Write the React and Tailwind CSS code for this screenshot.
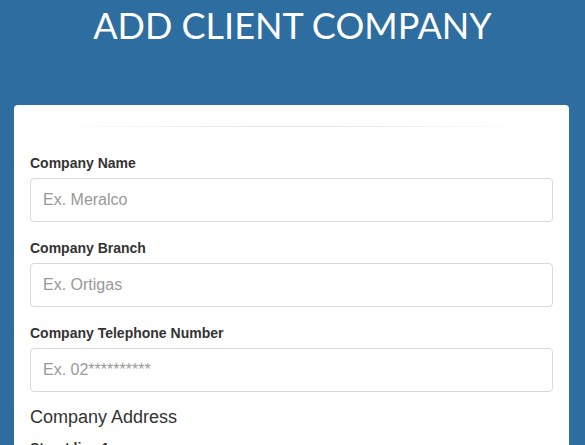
import React from 'react';

const fields = [
  { label: 'Company Name', placeholder: 'Ex. Meralco' },
  { label: 'Company Branch', placeholder: 'Ex. Ortigas' },
  { label: 'Company Telephone Number', placeholder: 'Ex. 02**********' },
];

const App = () => {
  return (
    <div className="min-h-screen bg-[#2e6d9f] overflow-hidden" style={{ fontFamily: '"Liberation Sans", Arial, sans-serif' }}>
      <h1 className="text-center text-white text-[36px] leading-[50px] h-[105px]" style={{ fontFamily: 'Lato, sans-serif' }}>
        ADD CLIENT COMPANY
      </h1>
      <div className="ml-[14px] mr-[16px] bg-white rounded-[4px] px-[16px] pt-[21px]">
        <div className="h-px mx-[16px] mb-[25px] bg-gradient-to-r from-transparent via-[#e2e2e2] to-transparent" />
        {fields.map((f) => (
          <div key={f.label} className="mb-[15px]">
            <label className="block text-[14px] leading-[21px] pt-px font-bold text-[#333] mb-[4px]">{f.label}</label>
            <input
              type="text"
              placeholder={f.placeholder}
              className="block w-full h-[44px] px-[12px] text-[16px] text-[#555] border border-[#d9d9d9] rounded-[4px] placeholder:text-[#999] outline-none"
            />
          </div>
        ))}
        <h3 className="text-[18px] leading-[20px] text-[#333] mb-[10px]">Company Address</h3>
        <label className="block text-[14px] leading-[21px] pt-px font-bold text-[#333] mb-[4px]">Street line 1</label>
        <input
          type="text"
          className="block w-full h-[44px] px-[12px] text-[16px] border border-[#d9d9d9] rounded-[4px] outline-none"
        />
      </div>
    </div>
  );
};

export default App;
